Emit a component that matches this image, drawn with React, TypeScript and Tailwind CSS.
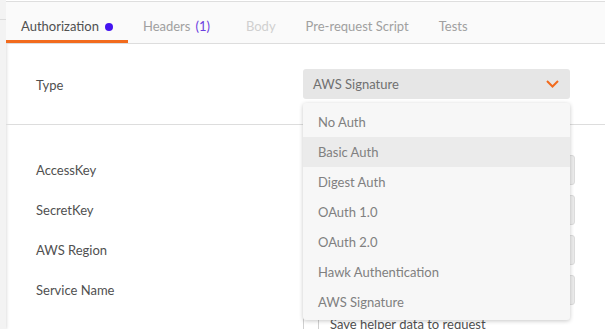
import { useState } from 'react'

const font = { fontFamily: 'Lato, "Open Sans", sans-serif' }

const tabs = [
  { label: 'Authorization', active: true },
  { label: 'Headers', count: '(1)' },
  { label: 'Body', disabled: true },
  { label: 'Pre-request Script' },
  { label: 'Tests' },
]

const authTypes = [
  'No Auth',
  'Basic Auth',
  'Digest Auth',
  'OAuth 1.0',
  'OAuth 2.0',
  'Hawk Authentication',
  'AWS Signature',
]

const fields = ['AccessKey', 'SecretKey', 'AWS Region', 'Service Name']

function Chevron() {
  return (
    <svg width="13" height="8" viewBox="0 0 13 8" fill="none">
      <path d="M1 1l5.5 5.5L12 1" stroke="#f26b1d" strokeWidth="2" />
    </svg>
  )
}

export default function App() {
  const [hover] = useState('Basic Auth')

  return (
    <div className="relative flex h-[329px] w-[605px] overflow-hidden bg-white text-[13px]" style={font}>
      <div className="w-[6px] shrink-0 bg-[#f3f3f3] shadow-[1px_0_3px_rgba(0,0,0,0.12)]">
        <div className="mt-[19px] h-px bg-[#dcdcdc]" />
      </div>

      <div className="flex min-w-0 flex-1 flex-col">
        <div className="h-[2px] shrink-0 border-b border-[#dedede] bg-white" />
        <div className="flex h-[42px] shrink-0 border-b border-[#dddddd] bg-[#fafafa]">
          {tabs.map((t) => (
            <div
              key={t.label}
              className={
                'flex items-center border-b-[3px] px-[15px] pt-[12px] ' +
                (t.active ? 'border-[#f26b1d] text-[#505050]' : 'border-transparent') +
                (t.disabled ? ' text-[#d0d0d0]' : t.active ? '' : ' text-[#a0a0a0]') +
                (t.count ? ' mr-[6px]' : '')
              }
            >
              {t.label}
              {t.active && <span className="ml-[6px] h-[8px] w-[8px] rounded-full bg-[#4414f0]" />}
              {t.count && <span className="ml-[5px] text-[#6a3ee0]">{t.count}</span>}
            </div>
          ))}
        </div>

        <div className="flex h-[81px] shrink-0 items-center border-b border-[#dddddd] pl-[30px]">
          <span className="w-[267px] pt-[3px] text-[#505050]">Type</span>
          <div className="flex h-[30px] w-[267px] items-center justify-between rounded-[3px] bg-[#e6e6e6] pl-[10px] pr-[11px] text-[#707070]">
            <span className="pt-[1px]">AWS Signature</span>
            <Chevron />
          </div>
        </div>

        <div className="flex shrink-0 flex-col gap-[10px] pl-[30px] pt-[30px]">
          {fields.map((f) => (
            <div key={f} className="flex h-[30px] shrink-0 items-center">
              <span className="w-[267px] pt-[2px] text-[#505050]">{f}</span>
              <div className="h-[30px] w-[272px] rounded-[3px] border border-[#dcdcdc] bg-[#ececec]" />
            </div>
          ))}
          <div className="flex shrink-0 items-center pl-[267px]">
            <span className="h-[15px] w-[16px] border border-[#d0d0d0] bg-white" />
            <span className="ml-[11px] text-[#505050]">Save helper data to request</span>
          </div>
        </div>
      </div>

      <div className="absolute left-[303px] top-[103px] w-[267px] rounded-[3px] bg-[#f7f7f7] pb-[3px] pt-[4px] text-[#808080] shadow-[0_1px_4px_rgba(0,0,0,0.22)]">
        {authTypes.map((a) => (
          <div key={a} className={'flex h-[30px] items-center pl-[15px] pt-[1px] ' + (a === hover ? 'bg-[#ebebeb]' : '')}>
            {a}
          </div>
        ))}
      </div>
    </div>
  )
}
